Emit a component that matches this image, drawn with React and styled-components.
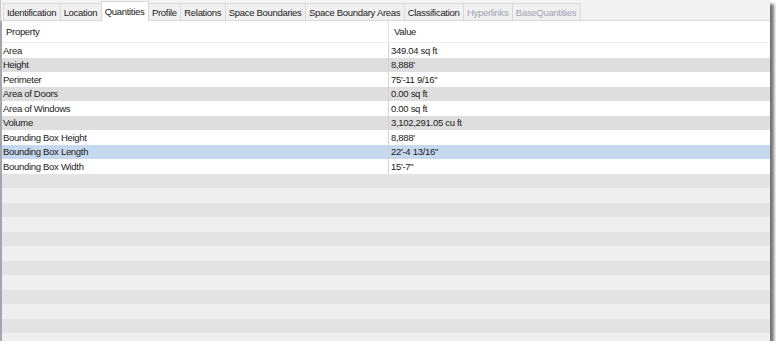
import React from "react";
import styled, { createGlobalStyle } from "styled-components";

const GlobalStyle = createGlobalStyle`
  html, body {
    margin: 0;
    padding: 0;
    background: #ffffff;
  }
  body {
    font-family: "Liberation Sans", Arial, sans-serif;
  }
`;

const Frame = styled.div`
  width: 770px;
  height: 341px;
  display: flex;
  flex-direction: column;
  background: #efefef;
  box-shadow: 4px 4px 3px rgba(0, 0, 0, 0.55);
  overflow: hidden;
  font-size: 9.5px;
  letter-spacing: -0.3px;
  color: #1a1a1a;
`;

const TabBar = styled.div`
  display: flex;
  align-items: flex-end;
  height: 20px;
  padding-left: 3px;
  background: #f3f3f3;
  border-bottom: 1px solid #dadada;
  border-left: 1px solid #c4c8cd;
  flex-shrink: 0;
`;

const Tab = styled.div`
  height: ${(p) => (p.$active ? "19px" : "16px")};
  padding: 0 3.5px 0 3px;
  display: flex;
  align-items: center;
  background: ${(p) => (p.$active ? "#ffffff" : "#f0f0f0")};
  border: 1px solid #d9d9d9;
  border-bottom: none;
  margin-left: -1px;
  margin-bottom: ${(p) => (p.$active ? "-1px" : "0")};
  color: ${(p) => (p.$disabled ? "#9ea3b5" : "#1a1a1a")};
  position: relative;
  white-space: nowrap;
`;

const Table = styled.div`
  flex: 1;
  display: flex;
  flex-direction: column;
  border-left: 2px solid #a2a8b0;
  overflow: hidden;
`;

const Header = styled.div`
  display: grid;
  grid-template-columns: 386px 1fr;
  height: 21px;
  background: #ffffff;
  border-bottom: 1px solid #ececec;
  flex-shrink: 0;
`;

const HeadCell = styled.div`
  display: flex;
  align-items: center;
  padding-left: ${(p) => (p.$first ? "4px" : "5px")};
  border-left: ${(p) => (p.$first ? "none" : "1px solid #e2e2e2")};
`;

const Row = styled.div`
  display: grid;
  grid-template-columns: 386px 1fr;
  height: 14.5px;
  flex-shrink: 0;
  background: ${(p) => p.$bg};
`;

const Cell = styled.div`
  display: flex;
  align-items: center;
  padding-left: ${(p) => (p.$first ? "1px" : "2px")};
  border-left: ${(p) => (p.$first ? "none" : "1px solid #d4d4d4")};
  white-space: nowrap;
  overflow: hidden;
`;

const tabs = [
  { label: "Identification" },
  { label: "Location" },
  { label: "Quantities", active: true },
  { label: "Profile" },
  { label: "Relations" },
  { label: "Space Boundaries" },
  { label: "Space Boundary Areas" },
  { label: "Classification" },
  { label: "Hyperlinks", disabled: true },
  { label: "BaseQuantities", disabled: true },
];

const rows = [
  ["Area", "349.04 sq ft"],
  ["Height", "8,888'"],
  ["Perimeter", "75'-11 9/16\""],
  ["Area of Doors", "0.00 sq ft"],
  ["Area of Windows", "0.00 sq ft"],
  ["Volume", "3,102,291.05 cu ft"],
  ["Bounding Box Height", "8,888'"],
  ["Bounding Box Length", "22'-4 13/16\""],
  ["Bounding Box Width", "15'-7\""],
];

const SELECTED = 7;

function rowColor(i) {
  if (i === SELECTED) return "#c6d8ee";
  return i % 2 === 0 ? "#ffffff" : "#dedede";
}

export default function App() {
  return (
    <>
      <GlobalStyle />
      <Frame>
        <TabBar>
          {tabs.map((t) => (
            <Tab key={t.label} $active={t.active} $disabled={t.disabled}>
              {t.label}
            </Tab>
          ))}
        </TabBar>
        <Table>
          <Header>
            <HeadCell $first>Property</HeadCell>
            <HeadCell>Value</HeadCell>
          </Header>
          {rows.map(([name, value], i) => (
            <Row key={name} $bg={rowColor(i)}>
              <Cell $first>{name}</Cell>
              <Cell>{value}</Cell>
            </Row>
          ))}
          {Array.from({ length: 12 }).map((_, i) => (
            <Row key={"empty" + i} $bg={i % 2 === 0 ? "#e3e3e3" : "#efefef"} />
          ))}
        </Table>
      </Frame>
    </>
  );
}
